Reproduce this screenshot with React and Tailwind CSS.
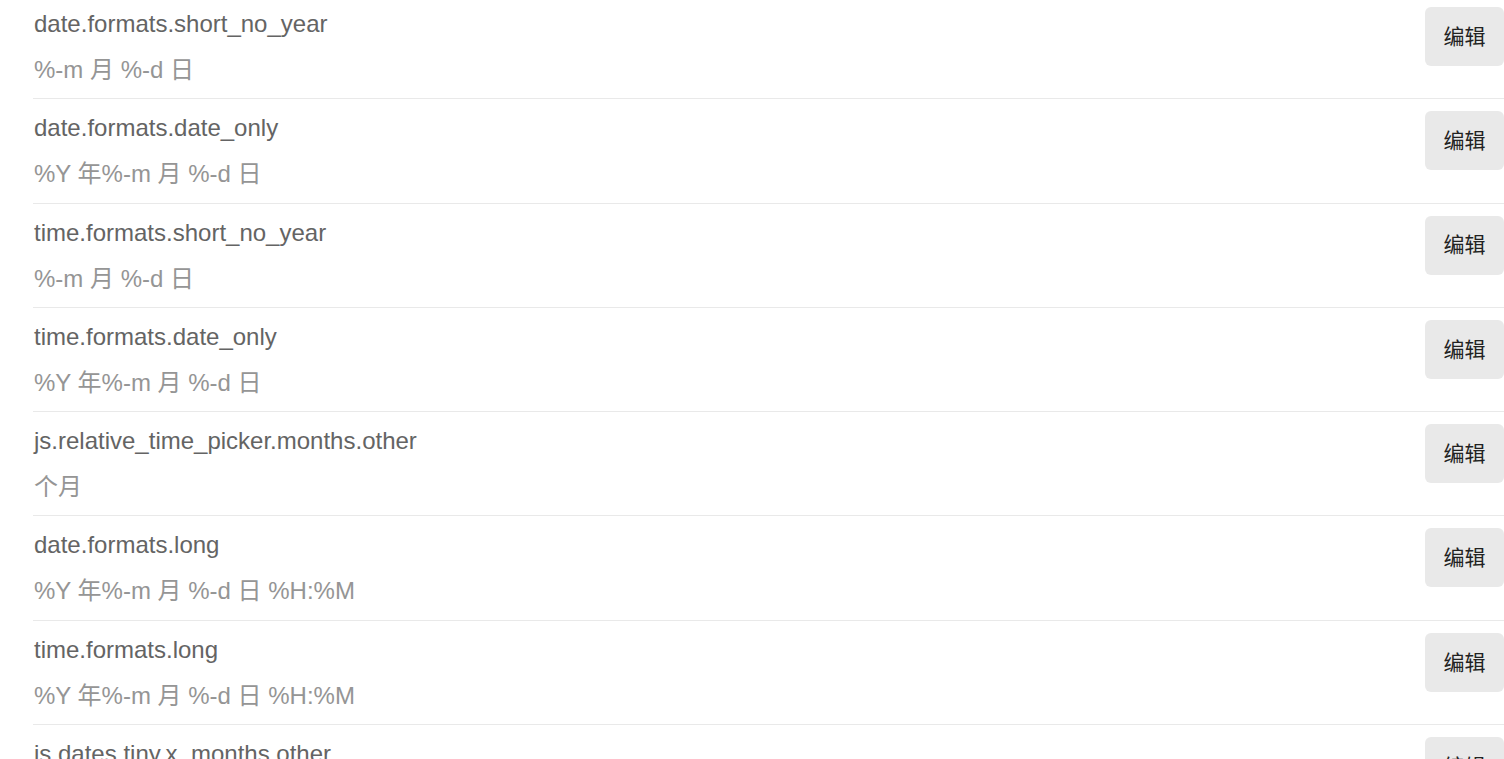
const rows = [
  { key: "date.formats.short_no_year", value: "%-m 月 %-d 日" },
  { key: "date.formats.date_only", value: "%Y 年%-m 月 %-d 日" },
  { key: "time.formats.short_no_year", value: "%-m 月 %-d 日" },
  { key: "time.formats.date_only", value: "%Y 年%-m 月 %-d 日" },
  { key: "js.relative_time_picker.months.other", value: "个月" },
  { key: "date.formats.long", value: "%Y 年%-m 月 %-d 日 %H:%M" },
  { key: "time.formats.long", value: "%Y 年%-m 月 %-d 日 %H:%M" },
  { key: "js.dates.tiny.x_months.other", value: "%{count} 个月" },
]

function Row({ item }) {
  return (
    <div className="flex justify-between border-b border-[#e9e9e9] pt-[12px] pb-[14.3px]">
      <div className="pt-[3px] pl-px">
        <div className="text-[24px] leading-[28px] text-[#646464]">{item.key}</div>
        <div className="mt-[18px] text-[24px] leading-[28px] text-[#959595]">{item.value}</div>
      </div>
      <button
        type="button"
        className="w-[79px] h-[59px] shrink-0 rounded-md bg-[#e9e9e9] text-[21px] text-[#222]"
      >
        编辑
      </button>
    </div>
  )
}

export default function App() {
  return (
    <div
      className="h-[759px] overflow-hidden bg-white pl-[33px]"
      style={{ fontFamily: '"Liberation Sans", Arial, "Noto Sans CJK SC", sans-serif' }}
    >
      <div className="-mt-[6px] border-t border-[#e9e9e9]">
        {rows.map((r) => (
          <Row key={r.key} item={r} />
        ))}
      </div>
    </div>
  )
}
